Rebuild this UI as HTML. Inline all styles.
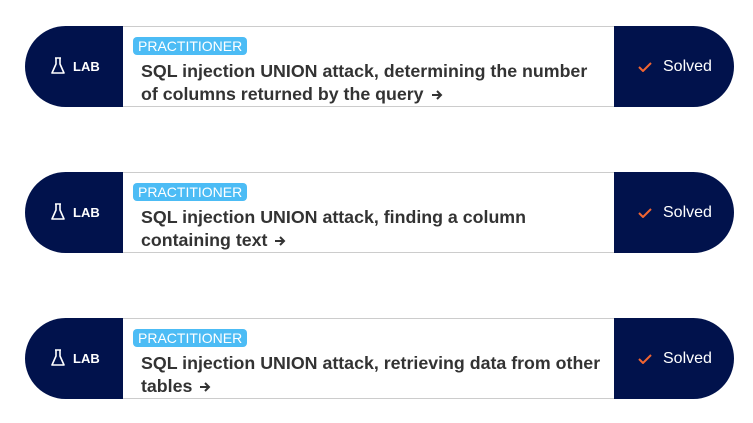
<!DOCTYPE html>
<html><head><style>
body{margin:0;background:#fff;width:753px;height:423px;font-family:"Liberation Sans",sans-serif;position:relative}
.card{position:absolute;left:25px;width:709px;height:81px;}
.l{position:absolute;left:0;top:0;width:98px;height:81px;background:#01124c;border-radius:41px 0 0 41px;color:#fff}
.l svg{position:absolute;left:26px;top:31px}
.l span{position:absolute;left:48px;top:33px;font-weight:bold;font-size:13px}
.m{position:absolute;left:98px;top:0;width:491px;height:79px;border-top:1px solid #ccc;border-bottom:1px solid #ccc;background:#fff}
.b{position:absolute;left:10px;top:10px;height:18px;padding:0 5px;background:#4cbcf5;color:#fff;font-size:14px;line-height:18px;border-radius:4px}
.t{position:absolute;left:18px;top:33px;font-size:17.8px;font-weight:bold;color:#333;line-height:23px;width:480px;white-space:nowrap}
.t svg{vertical-align:-1px;margin-left:2px}
.r{position:absolute;left:589px;top:0;width:120px;height:81px;background:#01124c;border-radius:0 41px 41px 0;color:#fff}
.r svg{position:absolute;left:24px;top:36px}
.r span{position:absolute;left:49px;top:32px;font-size:16px}
</style></head><body>
<div class="card" style="top:26px">
<div class="l"><svg width="14" height="18" viewBox="0 0 14 18"><path d="M4 1h6M5 1v6L1 16h12L9 7V1" fill="none" stroke="#fff" stroke-width="1.6" stroke-linejoin="round"/></svg><span>LAB</span></div>
<div class="m"><div class="b">PRACTITIONER</div><div class="t">SQL injection UNION attack, determining the number<br>of columns returned by the query <svg width="12" height="12" viewBox="0 0 12 12"><path d="M1 6h9M6 2l4 4-4 4" fill="none" stroke="#333" stroke-width="2"/></svg></div></div>
<div class="r"><svg width="14" height="10" viewBox="0 0 14 10"><path d="M1 5l4 4 8-8" fill="none" stroke="#f26531" stroke-width="2"/></svg><span>Solved</span></div>
</div>
<div class="card" style="top:172px">
<div class="l"><svg width="14" height="18" viewBox="0 0 14 18"><path d="M4 1h6M5 1v6L1 16h12L9 7V1" fill="none" stroke="#fff" stroke-width="1.6" stroke-linejoin="round"/></svg><span>LAB</span></div>
<div class="m"><div class="b">PRACTITIONER</div><div class="t">SQL injection UNION attack, finding a column<br>containing text <svg width="12" height="12" viewBox="0 0 12 12"><path d="M1 6h9M6 2l4 4-4 4" fill="none" stroke="#333" stroke-width="2"/></svg></div></div>
<div class="r"><svg width="14" height="10" viewBox="0 0 14 10"><path d="M1 5l4 4 8-8" fill="none" stroke="#f26531" stroke-width="2"/></svg><span>Solved</span></div>
</div>
<div class="card" style="top:318px">
<div class="l"><svg width="14" height="18" viewBox="0 0 14 18"><path d="M4 1h6M5 1v6L1 16h12L9 7V1" fill="none" stroke="#fff" stroke-width="1.6" stroke-linejoin="round"/></svg><span>LAB</span></div>
<div class="m"><div class="b">PRACTITIONER</div><div class="t">SQL injection UNION attack, retrieving data from other<br>tables <svg width="12" height="12" viewBox="0 0 12 12"><path d="M1 6h9M6 2l4 4-4 4" fill="none" stroke="#333" stroke-width="2"/></svg></div></div>
<div class="r"><svg width="14" height="10" viewBox="0 0 14 10"><path d="M1 5l4 4 8-8" fill="none" stroke="#f26531" stroke-width="2"/></svg><span>Solved</span></div>
</div>
</body></html>
